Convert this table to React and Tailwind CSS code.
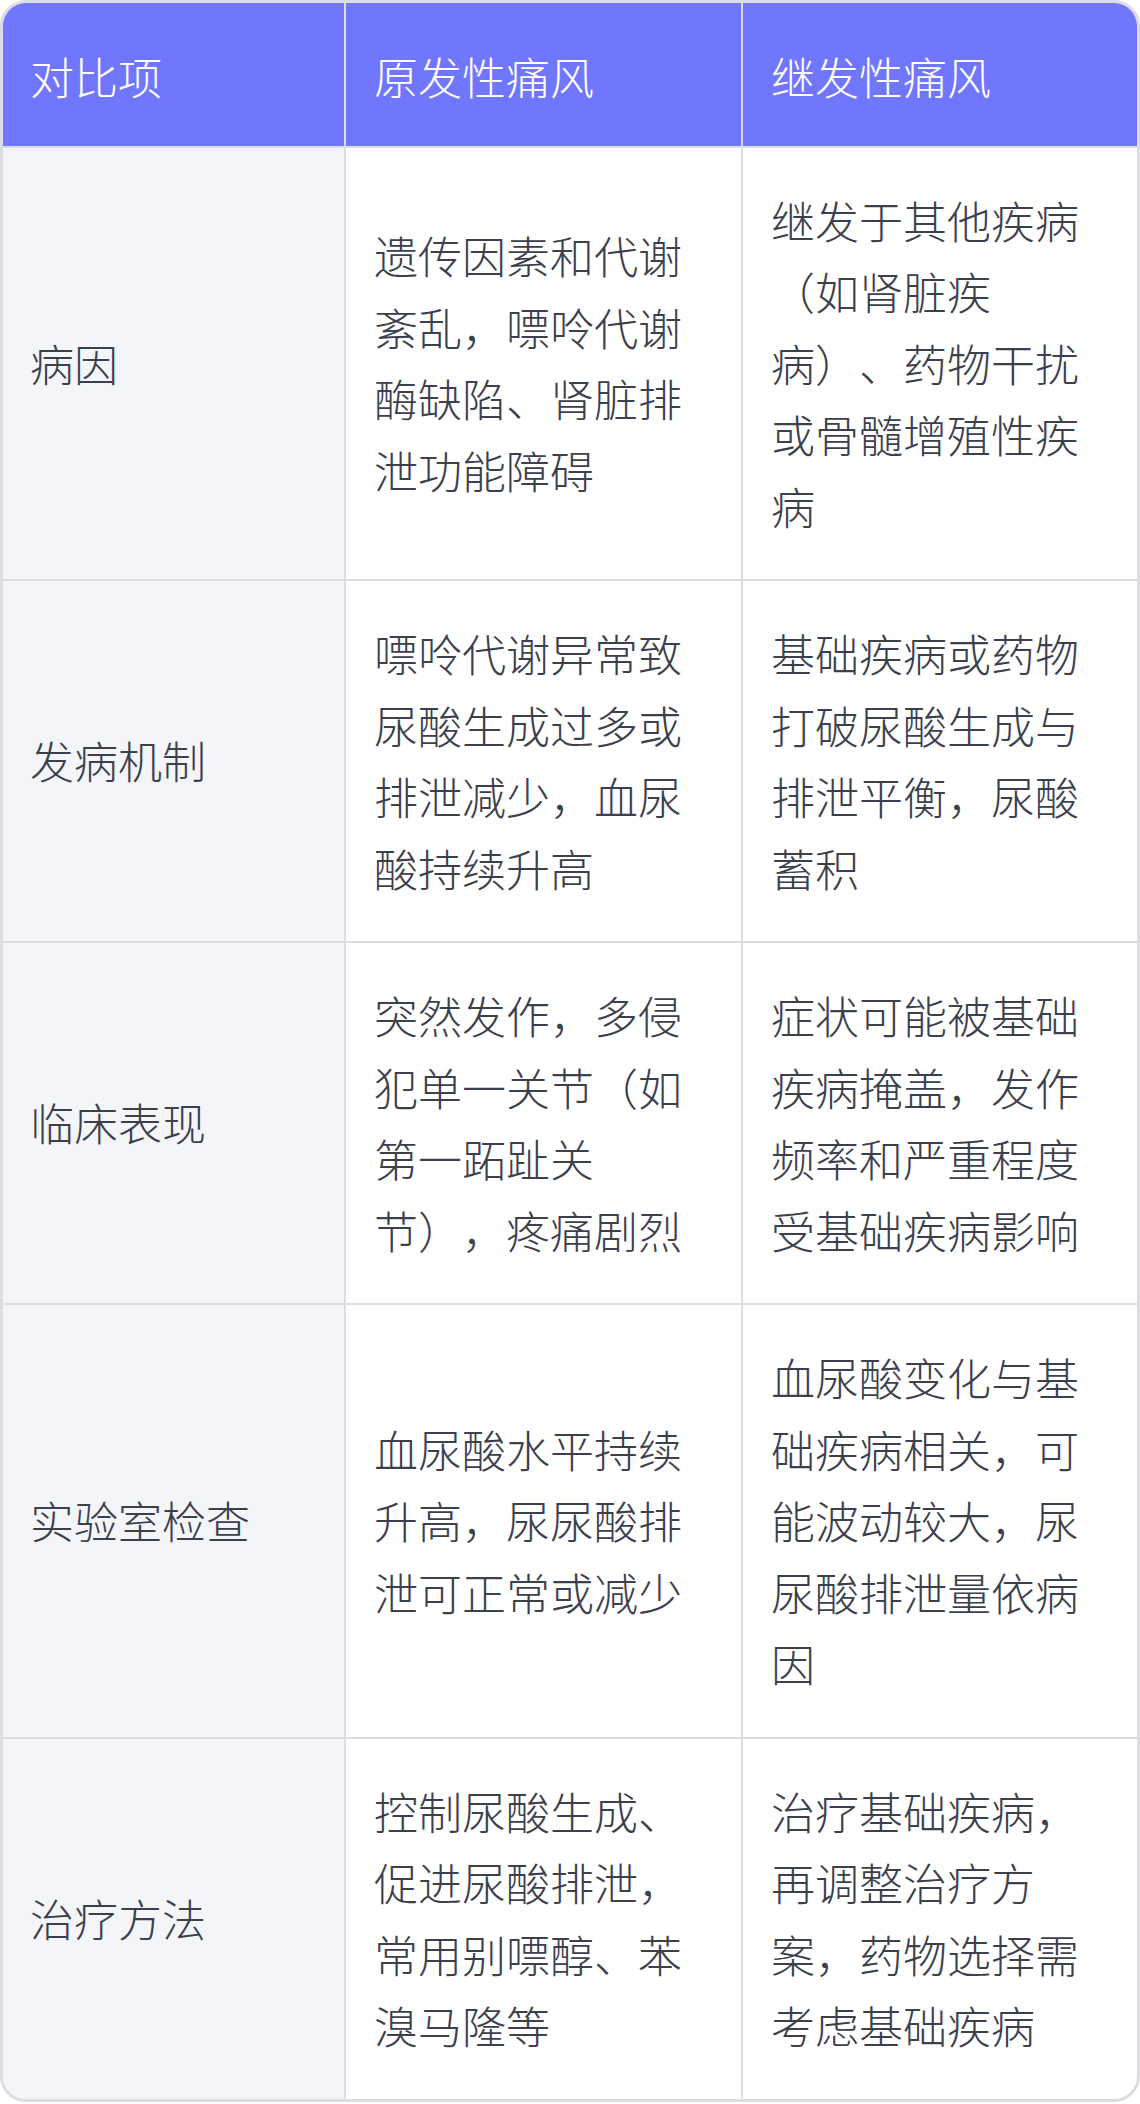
const rows = [
  {
    label: "病因",
    primary: "遗传因素和代谢紊乱，嘌呤代谢酶缺陷、肾脏排泄功能障碍",
    secondary: "继发于其他疾病（如肾脏疾病）、药物干扰或骨髓增殖性疾病",
  },
  {
    label: "发病机制",
    primary: "嘌呤代谢异常致尿酸生成过多或排泄减少，血尿酸持续升高",
    secondary: "基础疾病或药物打破尿酸生成与排泄平衡，尿酸蓄积",
  },
  {
    label: "临床表现",
    primary: "突然发作，多侵犯单一关节（如第一跖趾关节），疼痛剧烈",
    secondary: "症状可能被基础疾病掩盖，发作频率和严重程度受基础疾病影响",
  },
  {
    label: "实验室检查",
    primary: "血尿酸水平持续升高，尿尿酸排泄可正常或减少",
    secondary: "血尿酸变化与基础疾病相关，可能波动较大，尿尿酸排泄量依病因",
  },
  {
    label: "治疗方法",
    primary: "控制尿酸生成、促进尿酸排泄，常用别嘌醇、苯溴马隆等",
    secondary: "治疗基础疾病，再调整治疗方案，药物选择需考虑基础疾病",
  },
];

export default function App() {
  return (
    <div
      className="w-[1140px] bg-white font-light [text-spacing-trim:space-all]"
      style={{ fontFamily: '"Noto Sans CJK SC", "Noto Sans", sans-serif' }}
    >
      <div className="overflow-hidden rounded-[26px] border-[3px] border-[#dcdde2]">
        <table className="w-full table-fixed border-collapse text-[44px] leading-[71.5px]">
          <colgroup>
            <col className="w-[342px]" />
            <col className="w-[397px]" />
            <col />
          </colgroup>
          <thead>
            <tr className="bg-[#7176ff] text-white">
              <th className="border-r-2 border-b-2 border-[#dcdde2] px-[27px] pt-[38px] pb-[33px] text-left font-light">
                对比项
              </th>
              <th className="border-r-2 border-b-2 border-[#dcdde2] px-[28px] pt-[38px] pb-[33px] text-left font-light">
                原发性痛风
              </th>
              <th className="border-b-2 border-[#dcdde2] px-[28px] pt-[38px] pb-[33px] text-left font-light">
                继发性痛风
              </th>
            </tr>
          </thead>
          <tbody className="text-[#3c404d]">
            {rows.map((row, i) => {
              const last = i === rows.length - 1;
              return (
                <tr key={row.label}>
                  <td
                    className={`border-r-2 border-[#dcdde2] bg-[#f4f5f9] px-[27px] py-[37px] align-middle ${
                      last ? "" : "border-b-2"
                    }`}
                  >
                    {row.label}
                  </td>
                  <td
                    className={`border-r-2 border-[#dcdde2] px-[28px] py-[37px] align-middle ${
                      last ? "" : "border-b-2"
                    }`}
                  >
                    {row.primary}
                  </td>
                  <td
                    className={`border-[#dcdde2] px-[28px] py-[37px] align-middle ${
                      last ? "" : "border-b-2"
                    }`}
                  >
                    {row.secondary}
                  </td>
                </tr>
              );
            })}
          </tbody>
        </table>
      </div>
    </div>
  );
}
